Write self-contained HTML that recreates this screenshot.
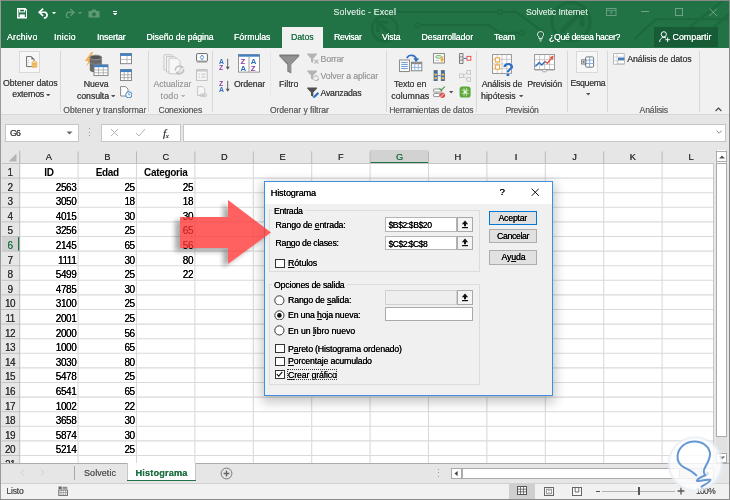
<!DOCTYPE html>
<html lang="es"><head><meta charset="utf-8"><title>Solvetic - Excel</title>
<style>
html,body{margin:0;padding:0;}
body{width:730px;height:500px;overflow:hidden;position:relative;background:#e6e6e6;font-family:"Liberation Sans",sans-serif;}
#app{position:absolute;left:0;top:0;width:730px;height:500px;overflow:hidden;}
#app div,#app span.t,#app svg{position:absolute;box-sizing:border-box;}
span.t{white-space:nowrap;will-change:opacity;text-shadow:0 0 0.45px currentColor;}
u{text-decoration:underline;text-underline-offset:1px;text-decoration-thickness:0.7px;}
</style></head><body><div id="app">
<div style="left:0px;top:0px;width:730px;height:48px;background:#217346;"></div>
<div style="left:0px;top:48px;width:730px;height:66.4px;background:#f1f1f1;"></div>
<div style="left:0px;top:114.4px;width:730px;height:1px;background:#d8d8d8;"></div>
<div style="left:0px;top:115.4px;width:730px;height:35px;background:#e6e6e6;"></div>
<svg style="left:16.5px;top:8.4px;" width="10.5" height="10.5" viewBox="0 0 10.5 10.5"><path d="M0.7 0.7 H8 L9.8 2.5 V9.8 H0.7 Z" fill="none" stroke="#fff" stroke-width="1.5"/><rect x="2.6" y="0.9" width="5" height="3" fill="none" stroke="#fff" stroke-width="1"/><rect x="2.6" y="6.4" width="5.2" height="3.2" fill="#fff"/></svg>
<svg style="left:37.8px;top:8.2px;" width="12.4" height="10.6" viewBox="0 0 11.5 10"><path d="M4.8 0.6 L1 4 L4.8 7.4" fill="none" stroke="#fff" stroke-width="1.6"/><path d="M1.2 4 H6.8 A3.4 3.1 0 0 1 6.8 9.4 H5.4" fill="none" stroke="#fff" stroke-width="1.6"/></svg>
<svg style="left:52.2px;top:12px;" width="4" height="2.4" viewBox="0 0 4 2.4"><path d="M0 0 H4 L2 2.4 Z" fill="#fff"/></svg>
<svg style="left:63px;top:8.2px;" width="12.2" height="10.2" viewBox="0 0 11.5 9.5"><path d="M6.9 0.8 L10.5 4 L6.9 7.2" fill="none" stroke="#5e9a78" stroke-width="1.3"/><path d="M10.3 4 H4.7 A3.4 3.1 0 0 0 4.7 9.2 H5.9" fill="none" stroke="#5e9a78" stroke-width="1.3"/></svg>
<svg style="left:78px;top:12px;" width="4" height="2.4" viewBox="0 0 4 2.4"><path d="M0 0 H4 L2 2.4 Z" fill="#5e9a78"/></svg>
<svg style="left:88px;top:8.6px;" width="12" height="9" viewBox="0 0 12 9"><path d="M0.5 2 H3.4 L4.4 0.5 H7.6 L8.6 2 H11.5 V8.5 H0.5 Z" fill="#5e9a78"/><circle cx="6" cy="5.2" r="2" fill="#217346" stroke="#4c8a68" stroke-width="0.6"/></svg>
<div style="left:112.7px;top:10.6px;width:4.4px;height:1.1px;background:#fff;"></div>
<svg style="left:112.7px;top:12.8px;" width="4.4" height="2.7" viewBox="0 0 4.2 2.6"><path d="M0 0 H4.2 L2.1 2.6 Z" fill="#fff"/></svg>
<svg style="left:330px;top:1px;" width="400" height="47" viewBox="0 0 400 47"><g fill="none" stroke="#1c693e" stroke-width="2.3" stroke-linecap="round" stroke-linejoin="round"><path d="M67 10.8 H167 M173 10.8 H186 L201 22 L214 32"/><path d="M90 24.2 H159 L170 31.9 H189"/><path d="M305 37.4 L326 18.2 H400"/><path d="M361 25 L392 0.4"/><path d="M372 36 L400 12"/></g><g fill="#217346" stroke="#1c693e" stroke-width="1.5"><circle cx="170" cy="10.8" r="2.3"/><circle cx="87.7" cy="24.2" r="2.3"/><circle cx="191.8" cy="31.9" r="2.3"/></g><circle cx="54.8" cy="27.8" r="12.6" fill="none" stroke="#1c693e" stroke-width="2.6"/><path d="M62 35 L49 22 M48 31 V21 H58" fill="none" stroke="#1c693e" stroke-width="3.2"/><circle cx="241" cy="20.5" r="19" fill="none" stroke="#1c693e" stroke-width="3.4"/><path d="M231 31 L251 11 M236 10 H252 V26" fill="none" stroke="#1c693e" stroke-width="4.6"/></svg>
<svg style="left:606px;top:7.6px;" width="10.5" height="8" viewBox="0 0 10.5 8"><rect x="0.5" y="0.5" width="9.5" height="7" fill="none" stroke="#6fa386" stroke-width="0.9"/><path d="M0.5 2.4 H10 M5.2 3.6 V6.4 M3.8 5 L5.2 3.6 L6.6 5" stroke="#6fa386" stroke-width="0.8" fill="none"/></svg>
<div style="left:641px;top:11.3px;width:7.5px;height:1px;background:#6fa386;"></div>
<svg style="left:674.5px;top:7.6px;" width="8" height="8" viewBox="0 0 8 8"><rect x="0.5" y="0.5" width="7" height="7" fill="none" stroke="#6fa386" stroke-width="1"/></svg>
<svg style="left:708.5px;top:7.6px;" width="8.5" height="8.5" viewBox="0 0 8.5 8.5"><path d="M0.5 0.5 L8 8 M8 0.5 L0.5 8" stroke="#6fa386" stroke-width="1"/></svg>
<svg style="left:536.9px;top:31.2px;" width="7.2" height="10.8" viewBox="0 0 8 12"><path d="M4 0.6 A3.2 3.2 0 0 1 5.8 6.6 V8.4 H2.2 V6.6 A3.2 3.2 0 0 1 4 0.6 Z" fill="none" stroke="#fff" stroke-width="0.9"/><path d="M2.6 9.8 H5.4 M3 11.2 H5" stroke="#fff" stroke-width="0.8"/></svg>
<span id="t1" class="t" style="left:333.5px;top:6.00px;font-size:8.8px;line-height:12px;color:#cfe0d5;letter-spacing:0.147px;">Solvetic - Excel</span>
<span id="t2" class="t" style="left:526px;top:6.00px;font-size:8.8px;line-height:12px;color:#cfe0d5;letter-spacing:-0.093px;">Solvetic Internet</span>
<span id="t3" class="t" style="left:7px;top:31.10px;font-size:8.8px;line-height:12px;color:#fff;letter-spacing:0.165px;">Archivo</span>
<span id="t4" class="t" style="left:54px;top:31.10px;font-size:8.8px;line-height:12px;color:#fff;letter-spacing:0.242px;">Inicio</span>
<span id="t5" class="t" style="left:97px;top:31.10px;font-size:8.8px;line-height:12px;color:#fff;letter-spacing:-0.166px;">Insertar</span>
<span id="t6" class="t" style="left:146.5px;top:31.10px;font-size:8.8px;line-height:12px;color:#fff;letter-spacing:-0.093px;">Diseño de página</span>
<span id="t7" class="t" style="left:234px;top:31.10px;font-size:8.8px;line-height:12px;color:#fff;letter-spacing:-0.021px;">Fórmulas</span>
<span id="t8" class="t" style="left:334px;top:31.10px;font-size:8.8px;line-height:12px;color:#fff;letter-spacing:-0.333px;">Revisar</span>
<span id="t9" class="t" style="left:382px;top:31.10px;font-size:8.8px;line-height:12px;color:#fff;letter-spacing:-0.181px;">Vista</span>
<span id="t10" class="t" style="left:421.5px;top:31.10px;font-size:8.8px;line-height:12px;color:#fff;letter-spacing:-0.101px;">Desarrollador</span>
<span id="t11" class="t" style="left:494px;top:31.10px;font-size:8.8px;line-height:12px;color:#fff;letter-spacing:-0.129px;">Team</span>
<span id="t12" class="t" style="left:549px;top:31.10px;font-size:8.8px;line-height:12px;color:#fff;letter-spacing:-0.398px;">¿Qué desea hacer?</span>
<div style="left:281.5px;top:26.5px;width:41.5px;height:22px;background:#f1f1f1;"></div>
<span id="t13" class="t" style="left:291px;top:31.10px;font-size:8.8px;line-height:12px;color:#217346;letter-spacing:-0.097px;">Datos</span>
<div style="left:653.5px;top:27px;width:64px;height:20px;background:#185c37;"></div>
<span id="t14" class="t" style="left:672.5px;top:31.10px;font-size:8.8px;line-height:12px;color:#fff;letter-spacing:0.042px;">Compartir</span>
<svg style="left:658.5px;top:31px;" width="12" height="11.5" viewBox="0 0 12 11.5"><circle cx="4.8" cy="3.3" r="2.6" fill="none" stroke="#fff" stroke-width="1"/><path d="M0.6 11 A4.3 4.6 0 0 1 7 7" fill="none" stroke="#fff" stroke-width="1"/><path d="M8.6 6.4 V11 M6.3 8.7 H10.9" stroke="#fff" stroke-width="1"/></svg>
<div style="left:19.2px;top:51px;width:21.3px;height:21.5px;background:#f7f7f7;border:1px solid #d9d9d9;"></div>
<svg style="left:25.8px;top:56.3px;" width="12" height="12.4" viewBox="0 0 12 12.4"><path d="M0.6 0.6 H5.4 L8.2 3.4 V10.6 H0.6 Z" fill="#fff" stroke="#6a6a6a" stroke-width="1"/><path d="M5.4 0.6 V3.4 H8.2 Z" fill="#6a6a6a"/><path d="M2.6 3.8 V8.6" stroke="#b9c6d6" stroke-width="1.2" stroke-dasharray="1.2 0.9"/><rect x="5.6" y="4.9" width="5.6" height="6.9" rx="1.6" fill="#eeb357"/><ellipse cx="8.4" cy="6" rx="2.6" ry="1" fill="#f7d498"/><path d="M5.8 8.6 A2.6 1 0 0 0 11 8.6" fill="none" stroke="#f7d498" stroke-width="0.6"/></svg>
<span id="t15" class="t" style="left:3px;top:77.00px;font-size:8.8px;line-height:12px;color:#444;letter-spacing:-0.096px;">Obtener datos</span>
<span id="t16" class="t" style="left:12.3px;top:88.10px;font-size:8.8px;line-height:12px;color:#444;letter-spacing:-0.256px;">externos</span>
<svg style="left:45.5px;top:93.49999999999999px;" width="4.4" height="2.6" viewBox="0 0 4.4 2.6"><path d="M0 0 L4.4 0 L2.2 2.6 Z" fill="#555"/></svg>
<div style="left:60px;top:51px;width:1px;height:60.8px;background:#d8d8d8;"></div>
<svg style="left:84px;top:52.2px;" width="24.5" height="24.5" viewBox="0 0 24.5 24.5"><path d="M7.4 0 L0.8 9 H4.4 L2.2 14.5 L9.4 6 H6 L9.4 0 Z" fill="#f2b050"/><path d="M5.8 5.4 V18 A6 2.3 0 0 0 17.8 18 V5.4 Z" fill="#6a6a6a"/><ellipse cx="11.8" cy="5.4" rx="6" ry="2.3" fill="#555" stroke="#9c9c9c" stroke-width="0.8"/><path d="M5.8 10 A6 2.3 0 0 0 17.8 10" fill="none" stroke="#8e8e8e" stroke-width="0.6"/><rect x="10" y="12.8" width="14" height="10.8" fill="#fff" stroke="#7b7b7b" stroke-width="0.9"/><rect x="10" y="12.8" width="14" height="2.4" fill="#3f7fc4"/><path d="M14.6 15.2 V23.6 M19.3 15.2 V23.6 M10 18 H24 M10 20.8 H24" stroke="#9b9b9b" stroke-width="0.7"/></svg>
<span id="t17" class="t" style="left:83.8px;top:77.70px;font-size:8.8px;line-height:12px;color:#444;letter-spacing:-0.147px;">Nueva</span>
<span id="t18" class="t" style="left:77px;top:89.60px;font-size:8.8px;line-height:12px;color:#444;letter-spacing:-0.096px;">consulta</span>
<svg style="left:110.8px;top:94.8px;" width="4.4" height="2.6" viewBox="0 0 4.4 2.6"><path d="M0 0 L4.4 0 L2.2 2.6 Z" fill="#555"/></svg>
<svg style="left:119.6px;top:53px;" width="12" height="11.5" viewBox="0 0 12 11.5"><rect x="0.5" y="0.5" width="11" height="10.2" fill="#fff" stroke="#7b7b7b" stroke-width="0.9"/><rect x="0.5" y="0.5" width="11" height="2.4" fill="#3f7fc4"/><path d="M0.5 6.5 H11.5 M7 3 V10.5" stroke="#a5a5a5" stroke-width="0.7"/></svg>
<svg style="left:119.6px;top:69px;" width="12" height="12" viewBox="0 0 12 12"><rect x="0.5" y="0.5" width="11" height="11" fill="#fff" stroke="#7b7b7b" stroke-width="0.9"/><rect x="0.5" y="0.5" width="11" height="2.6" fill="#3f7fc4"/><path d="M0.5 5.8 H11.5 M0.5 8.6 H11.5 M4.2 3 V11.5 M7.9 3 V11.5" stroke="#8f8f8f" stroke-width="0.7"/></svg>
<svg style="left:119.6px;top:85.7px;" width="12.5" height="12.5" viewBox="0 0 12.5 12.5"><path d="M0.6 0.6 H5.6 L8 3 V10 H0.6 Z" fill="#fff" stroke="#7b7b7b" stroke-width="0.9"/><circle cx="8.8" cy="8.8" r="3.1" fill="#fff" stroke="#3f7fc4" stroke-width="1"/><path d="M8.8 7 V8.9 H10.3" stroke="#3f7fc4" stroke-width="0.8" fill="none"/></svg>
<span id="t19" class="t" style="left:63.3px;top:103.70px;font-size:8.6px;line-height:12px;color:#666;letter-spacing:-0.051px;">Obtener y transformar</span>
<div style="left:148px;top:51px;width:1px;height:60.8px;background:#d8d8d8;"></div>
<svg style="left:162.6px;top:54px;" width="22" height="22.5" viewBox="0 0 22 22.5"><path d="M1 0.8 H9 L12 3.8 V16 H1 Z" fill="#f4f4f4" stroke="#c4c4c4" stroke-width="0.9"/><path d="M3.5 2.5 H11.5 L14.5 5.5 V18 H3.5 Z" fill="#f4f4f4" stroke="#c4c4c4" stroke-width="0.9"/><path d="M6 4.2 H14 L17 7.2 V19.8 H6 Z" fill="#f7f7f7" stroke="#c4c4c4" stroke-width="0.9"/><path d="M12.3 16.5 A4.3 4.3 0 0 1 19.6 13.2 M20.6 15 A4.3 4.3 0 0 1 13.3 18.6" fill="none" stroke="#c0c0c0" stroke-width="1.5"/><path d="M18.3 11.3 L21 13.6 L17.8 14.8 Z M15.6 20.4 L12.6 18.3 L15.9 17.1 Z" fill="#c0c0c0"/></svg>
<span id="t20" class="t" style="left:153.4px;top:77.70px;font-size:8.8px;line-height:12px;color:#a0a0a0;letter-spacing:-0.062px;">Actualizar</span>
<span id="t21" class="t" style="left:160.5px;top:89.60px;font-size:8.8px;line-height:12px;color:#a0a0a0;letter-spacing:0.244px;">todo</span>
<svg style="left:180.5px;top:94.8px;" width="4.4" height="2.6" viewBox="0 0 4.4 2.6"><path d="M0 0 L4.4 0 L2.2 2.6 Z" fill="#b5b5b5"/></svg>
<svg style="left:195.5px;top:53px;" width="12" height="10" viewBox="0 0 12 10"><rect x="0.6" y="0.6" width="10.8" height="7.6" rx="0.8" fill="#fff" stroke="#666" stroke-width="1"/><path d="M6 2 L7.8 4.4 L6 6.8 L4.2 4.4 Z" fill="none" stroke="#3f7fc4" stroke-width="0.9"/><path d="M0.6 9.2 H11.4" stroke="#999" stroke-width="0.8"/></svg>
<svg style="left:195.5px;top:69px;" width="12" height="12" viewBox="0 0 12 12"><rect x="0.6" y="0.6" width="10.6" height="10.8" fill="#f6f6f6" stroke="#bcbcbc" stroke-width="0.9"/><rect x="0.6" y="0.6" width="10.6" height="2" fill="#c9c9c9"/><path d="M2.5 5.2 H4 M5.2 5.2 H9.5 M2.5 8 H4 M5.2 8 H9.5" stroke="#bdbdbd" stroke-width="0.9"/></svg>
<svg style="left:196.5px;top:86px;" width="11" height="12" viewBox="0 0 11 12"><path d="M0.6 0.6 H5.4 L7.8 3 V9.5 H0.6 Z" fill="#f6f6f6" stroke="#c2c2c2" stroke-width="0.9"/><rect x="3" y="7.8" width="3.8" height="2.8" rx="1.3" fill="none" stroke="#c2c2c2" stroke-width="0.9"/><rect x="5.8" y="7.8" width="3.8" height="2.8" rx="1.3" fill="none" stroke="#c2c2c2" stroke-width="0.9"/></svg>
<span id="t22" class="t" style="left:158.5px;top:103.70px;font-size:8.6px;line-height:12px;color:#666;letter-spacing:-0.189px;">Conexiones</span>
<div style="left:212px;top:51px;width:1px;height:60.8px;background:#d8d8d8;"></div>
<svg style="left:219px;top:57.5px;" width="12" height="13" viewBox="0 0 12 13"><text x="0" y="5.6" font-size="6.8" font-weight="bold" fill="#2f6fc0" font-family="Liberation Sans,sans-serif">A</text><text x="0" y="12" font-size="6.8" font-weight="bold" fill="#8a3ea8" font-family="Liberation Sans,sans-serif">Z</text><path d="M8.7 0.8 V10" stroke="#555" stroke-width="0.9" fill="none"/><path d="M6.7 8.8 L8.7 11.8 L10.7 8.8 Z" fill="#555"/></svg>
<svg style="left:219px;top:80.2px;" width="12" height="13" viewBox="0 0 12 13"><text x="0" y="5.6" font-size="6.8" font-weight="bold" fill="#8a3ea8" font-family="Liberation Sans,sans-serif">Z</text><text x="0" y="12" font-size="6.8" font-weight="bold" fill="#2f6fc0" font-family="Liberation Sans,sans-serif">A</text><path d="M8.7 0.8 V10" stroke="#555" stroke-width="0.9" fill="none"/><path d="M6.7 8.8 L8.7 11.8 L10.7 8.8 Z" fill="#555"/></svg>
<svg style="left:238px;top:54.3px;" width="22" height="19" viewBox="0 0 22 19"><rect x="0.5" y="0.5" width="21" height="17.6" fill="#fff" stroke="#8a8a8a" stroke-width="0.9"/><rect x="0.5" y="0.5" width="21" height="2.2" fill="#3f7fc4"/><path d="M11 2.7 V18" stroke="#8a8a8a" stroke-width="0.8"/><text x="2.6" y="9.8" font-size="7.8" font-weight="bold" fill="#8a3ea8" font-family="Liberation Sans,sans-serif">Z</text><text x="2.6" y="17" font-size="7.8" font-weight="bold" fill="#2f6fc0" font-family="Liberation Sans,sans-serif">A</text><text x="12.8" y="9.8" font-size="7.8" font-weight="bold" fill="#2f6fc0" font-family="Liberation Sans,sans-serif">A</text><text x="12.8" y="17" font-size="7.8" font-weight="bold" fill="#8a3ea8" font-family="Liberation Sans,sans-serif">Z</text></svg>
<span id="t23" class="t" style="left:233.9px;top:77.70px;font-size:8.8px;line-height:12px;color:#444;letter-spacing:-0.169px;">Ordenar</span>
<div style="left:270px;top:51px;width:1px;height:44px;background:#e6e6e6;"></div>
<svg style="left:279px;top:53.6px;" width="20.5" height="20.5" viewBox="0 0 20.5 20.5"><path d="M0.3 0.6 H20.2 V2.2 L12.2 10.4 V19.6 L8.3 17.4 V10.4 L0.3 2.2 Z" fill="#7a7a7a"/><path d="M1.2 2.2 H19.3 L12.2 9.6 V18.4 L9.2 16.8 V9.6 Z" fill="#929292"/></svg>
<span id="t24" class="t" style="left:279px;top:77.70px;font-size:8.8px;line-height:12px;color:#444;letter-spacing:-0.027px;">Filtro</span>
<svg style="left:306.6px;top:53.4px;" width="12.5" height="11.5" viewBox="0 0 12.5 11.5"><path d="M0.2 0.4 H10 V1.5 L6.3 5.4 V10 L4 8.7 V5.4 L0.2 1.5 Z" fill="#b4b4b4"/><path d="M7.4 6.6 L11.4 10.6 M11.4 6.6 L7.4 10.6" stroke="#b0b0b0" stroke-width="1.1"/></svg>
<svg style="left:306.6px;top:70px;" width="12.5" height="11.5" viewBox="0 0 12.5 11.5"><path d="M0.2 0.4 H10 V1.5 L6.3 5.4 V10 L4 8.7 V5.4 L0.2 1.5 Z" fill="#b4b4b4"/><circle cx="9" cy="8.2" r="2.4" fill="none" stroke="#b4b4b4" stroke-width="1" stroke-dasharray="5.5 2"/><path d="M10.4 10.9 L12.2 9.6 L10.2 8.6 Z" fill="#b4b4b4"/></svg>
<svg style="left:306.6px;top:86.8px;" width="12.5" height="11.5" viewBox="0 0 12.5 11.5"><path d="M0.2 0.4 H10 V1.5 L6.3 5.4 V10 L4 8.7 V5.4 L0.2 1.5 Z" fill="#505050"/><path d="M6 11.2 L6.6 9 L10.6 5 L12.2 6.6 L8.2 10.6 Z" fill="#2f6fc0"/></svg>
<span id="t25" class="t" style="left:320.6px;top:53.20px;font-size:8.8px;line-height:12px;color:#a0a0a0;letter-spacing:-0.209px;">Borrar</span>
<span id="t26" class="t" style="left:320.6px;top:70.00px;font-size:8.8px;line-height:12px;color:#a0a0a0;letter-spacing:-0.166px;">Volver a aplicar</span>
<span id="t27" class="t" style="left:320.6px;top:86.90px;font-size:8.8px;line-height:12px;color:#444;letter-spacing:-0.297px;">Avanzadas</span>
<span id="t28" class="t" style="left:269.9px;top:103.70px;font-size:8.6px;line-height:12px;color:#666;letter-spacing:-0.047px;">Ordenar y filtrar</span>
<div style="left:386px;top:51px;width:1px;height:60.8px;background:#d8d8d8;"></div>
<svg style="left:399px;top:52.5px;" width="23.5" height="20.5" viewBox="0 0 23.5 20.5"><path d="M7.8 5.2 A5.2 5.2 0 0 1 17.4 5.8" fill="none" stroke="#2f6fc0" stroke-width="1.7"/><path d="M14.4 5 L20.2 5.6 L16.9 9.2 Z" fill="#2f6fc0"/><rect x="0.6" y="7" width="9.8" height="11.6" fill="#fff" stroke="#7b7b7b" stroke-width="0.9"/><path d="M2.2 9.6 H8.8 M2.2 11.6 H8.8 M2.2 13.6 H8.8 M2.2 15.6 H8.8" stroke="#3f7fc4" stroke-width="0.8"/><rect x="12.4" y="9.2" width="10.4" height="8.6" fill="#fff" stroke="#7b7b7b" stroke-width="0.9"/><rect x="12.4" y="9.2" width="10.4" height="2" fill="#8a8a8a"/><path d="M15.8 11 V17.8 M19.3 11 V17.8 M12.4 14.4 H22.8" stroke="#7aa7db" stroke-width="0.8"/></svg>
<span id="t29" class="t" style="left:394px;top:77.70px;font-size:8.8px;line-height:12px;color:#444;letter-spacing:-0.133px;">Texto en</span>
<span id="t30" class="t" style="left:391.3px;top:89.60px;font-size:8.8px;line-height:12px;color:#444;letter-spacing:0.043px;">columnas</span>
<svg style="left:433px;top:52.8px;" width="12.5" height="11.5" viewBox="0 0 12.5 11.5"><rect x="0.6" y="0.6" width="10.8" height="9.4" fill="#fff" stroke="#7b7b7b" stroke-width="0.9"/><rect x="2.8" y="2.6" width="5.6" height="2.6" rx="1.2" fill="#dff0d8" stroke="#5b9b4d" stroke-width="0.7"/><path d="M2.4 7.4 H6" stroke="#aaa" stroke-width="0.7"/><path d="M9.6 3.2 L7 7.4 H8.8 L7.6 10.8 L11.6 6 H9.6 L10.8 3.2 Z" fill="#f0a63a"/></svg>
<svg style="left:433px;top:69.7px;" width="12.5" height="11.5" viewBox="0 0 12.5 11.5"><rect x="1" y="0.6" width="3.2" height="10.2" fill="#2f6fc0" stroke="#555" stroke-width="0.6"/><rect x="8.2" y="0.6" width="3.2" height="10.2" fill="#2f6fc0" stroke="#555" stroke-width="0.6"/><rect x="1.4" y="3.6" width="2.4" height="2" fill="#f2c14e"/><rect x="8.6" y="3.6" width="2.4" height="2" fill="#f2c14e"/><rect x="1.4" y="7.2" width="2.4" height="2" fill="#f2c14e"/><rect x="8.6" y="7.2" width="2.4" height="2" fill="#f2c14e"/><path d="M4.8 5.7 H7.6" stroke="#2f6fc0" stroke-width="0.9"/></svg>
<svg style="left:433px;top:86px;" width="13" height="12.5" viewBox="0 0 13 12.5"><rect x="0.6" y="3" width="8" height="3" rx="0.6" fill="#fff" stroke="#777" stroke-width="0.8"/><rect x="0.6" y="7.6" width="6" height="3" rx="0.6" fill="#fff" stroke="#777" stroke-width="0.8"/><path d="M6.4 2.6 L8.2 4.4 L11.8 0.6" fill="none" stroke="#4c9b4c" stroke-width="1.2"/><circle cx="9.4" cy="9.2" r="2.7" fill="#e0524c"/><path d="M7.6 11 L11.2 7.4" stroke="#fff" stroke-width="0.8"/></svg>
<svg style="left:449.3px;top:91.2px;" width="4.4" height="2.6" viewBox="0 0 4.4 2.6"><path d="M0 0 L4.4 0 L2.2 2.6 Z" fill="#555"/></svg>
<svg style="left:459px;top:52.8px;" width="12.5" height="11.5" viewBox="0 0 12.5 11.5"><rect x="0.6" y="0.6" width="3.4" height="9.8" fill="#e8e8e8" stroke="#666" stroke-width="0.8"/><path d="M0.6 3.9 H4 M0.6 7.1 H4" stroke="#666" stroke-width="0.7"/><path d="M4.6 5.4 H7.6" stroke="#2f6fc0" stroke-width="1"/><rect x="8" y="3.4" width="3.8" height="3.8" fill="#fff" stroke="#e0524c" stroke-width="1"/></svg>
<svg style="left:459px;top:69.7px;" width="12.5" height="12" viewBox="0 0 12.5 12"><rect x="0.6" y="4" width="3.6" height="3.6" fill="#f4f4f4" stroke="#bcbcbc" stroke-width="0.8"/><rect x="8" y="0.6" width="3.6" height="3.6" fill="#f4f4f4" stroke="#bcbcbc" stroke-width="0.8"/><rect x="8" y="7.6" width="3.6" height="3.6" fill="#f4f4f4" stroke="#bcbcbc" stroke-width="0.8"/><path d="M4.2 5.8 L8 2.4 M4.2 5.8 L8 9.4" stroke="#bcbcbc" stroke-width="0.8" fill="none"/></svg>
<svg style="left:459px;top:86px;" width="12.5" height="12.5" viewBox="0 0 12.5 12.5"><rect x="0.6" y="0.6" width="11" height="11" rx="2.6" fill="#5aa83a"/><path d="M2.4 4.2 H9.8 M2.4 7.4 H9.8 M5 2 V10.2 M7.6 2 V10.2" stroke="#cfe8bf" stroke-width="0.8"/><circle cx="6.2" cy="6" r="1.4" fill="#e9f5df"/></svg>
<span id="t31" class="t" style="left:389.2px;top:103.70px;font-size:8.6px;line-height:12px;color:#666;letter-spacing:-0.126px;">Herramientas de datos</span>
<div style="left:476px;top:51px;width:1px;height:60.8px;background:#d8d8d8;"></div>
<svg style="left:492.4px;top:54px;" width="22.5" height="22.5" viewBox="0 0 22.5 22.5"><rect x="0.6" y="0.6" width="18.8" height="18.8" fill="#fff" stroke="#8a8a8a" stroke-width="0.9"/><path d="M0.6 5.3 H19.4 M0.6 10 H19.4 M0.6 14.7 H19.4 M5.3 0.6 V19.4 M10 0.6 V19.4 M14.7 0.6 V19.4" stroke="#b5b5b5" stroke-width="0.7"/><rect x="3.4" y="3.8" width="4.2" height="4.2" fill="#fff" stroke="#f0a63a" stroke-width="1.1"/><rect x="3.4" y="11" width="4.2" height="4.2" fill="#fff" stroke="#f0a63a" stroke-width="1.1"/><text x="10.4" y="22" font-size="19" font-weight="bold" fill="#2f6fc0" stroke="#f1f1f1" stroke-width="0.5" paint-order="stroke" font-family="Liberation Sans,sans-serif">?</text></svg>
<span id="t32" class="t" style="left:481.7px;top:77.70px;font-size:8.8px;line-height:12px;color:#444;letter-spacing:-0.186px;">Análisis de</span>
<span id="t33" class="t" style="left:481px;top:89.60px;font-size:8.8px;line-height:12px;color:#444;letter-spacing:-0.015px;">hipótesis</span>
<svg style="left:519.1999999999999px;top:94.8px;" width="4.4" height="2.6" viewBox="0 0 4.4 2.6"><path d="M0 0 L4.4 0 L2.2 2.6 Z" fill="#555"/></svg>
<svg style="left:533.9px;top:54px;" width="21.5" height="19" viewBox="0 0 21.5 19"><rect x="0.6" y="0.6" width="20" height="15" fill="#fff" stroke="#8a8a8a" stroke-width="0.9"/><path d="M0.6 5.6 H20.6 M0.6 10.6 H20.6 M5.6 0.6 V15.6 M10.6 0.6 V15.6 M15.6 0.6 V15.6" stroke="#b5b5b5" stroke-width="0.7"/><path d="M1.4 12.6 L5.2 8.6 L7.8 11 L11 7.6" fill="none" stroke="#2f6fc0" stroke-width="1.4"/><path d="M11 7.6 L13.6 9 L18 3.6" fill="none" stroke="#e0523a" stroke-width="1.4"/><path d="M19.6 1.6 L19 5.8 L15.6 3.2 Z" fill="#e0523a"/><path d="M1 16 H8 L9 17.8 H12 L13 16 H20" stroke="#9a9a9a" stroke-width="0.8" fill="none"/></svg>
<span id="t34" class="t" style="left:527.3px;top:77.70px;font-size:8.8px;line-height:12px;color:#444;letter-spacing:-0.165px;">Previsión</span>
<span id="t35" class="t" style="left:505.5px;top:103.70px;font-size:8.6px;line-height:12px;color:#666;letter-spacing:-0.251px;">Previsión</span>
<div style="left:567px;top:51px;width:1px;height:60.8px;background:#d8d8d8;"></div>
<div style="left:576.4px;top:51.2px;width:21.2px;height:21.5px;background:#f7f7f7;border:1px solid #d9d9d9;"></div>
<svg style="left:581.4px;top:55.8px;" width="13.2" height="12" viewBox="0 0 11.5 10.5"><rect x="4" y="0.8" width="7" height="9" rx="1" fill="#fff" stroke="#6a6a6a" stroke-width="0.8"/><path d="M4 3.6 H11 M4 6.6 H11 M7.5 0.8 V9.8" stroke="#7aa7db" stroke-width="0.8"/><rect x="0.6" y="3.4" width="3.6" height="3.6" fill="#fff" stroke="#666" stroke-width="0.8"/><path d="M1.4 5.2 H3.4 M2.4 4.2 V6.2" stroke="#555" stroke-width="0.7"/></svg>
<span id="t36" class="t" style="left:570.5px;top:76.60px;font-size:8.8px;line-height:12px;color:#444;letter-spacing:-0.353px;">Esquema</span>
<svg style="left:585.8px;top:93.0px;" width="4.4" height="2.6" viewBox="0 0 4.4 2.6"><path d="M0 0 L4.4 0 L2.2 2.6 Z" fill="#555"/></svg>
<div style="left:607px;top:51px;width:1px;height:60.8px;background:#d8d8d8;"></div>
<svg style="left:612.8px;top:53px;" width="12" height="12" viewBox="0 0 12 12"><rect x="0.6" y="0.6" width="10.6" height="10.6" fill="#fff" stroke="#a9a9a9" stroke-width="0.8"/><path d="M0.6 4 H11.2 M0.6 7.6 H11.2 M4 0.6 V11.2" stroke="#c6c6c6" stroke-width="0.7"/><rect x="5" y="4.6" width="6.4" height="2.4" fill="#3f7fc4"/><rect x="5" y="7.4" width="6.4" height="3.4" fill="#fff" stroke="#a9a9a9" stroke-width="0.6"/></svg>
<span id="t37" class="t" style="left:627.3px;top:53.20px;font-size:8.8px;line-height:12px;color:#444;letter-spacing:-0.142px;">Análisis de datos</span>
<span id="t38" class="t" style="left:639.6px;top:103.70px;font-size:8.6px;line-height:12px;color:#666;letter-spacing:-0.153px;">Análisis</span>
<div style="left:699px;top:51px;width:1px;height:60.8px;background:#d8d8d8;"></div>
<svg style="left:715.3px;top:107.3px;" width="7" height="4.5" viewBox="0 0 7 4.5"><path d="M0.6 4 L3.5 1 L6.4 4" fill="none" stroke="#444" stroke-width="1.1"/></svg>
<div style="left:5px;top:123.5px;width:74px;height:18.5px;background:#fff;border:1px solid #c6c6c6;"></div>
<span id="t39" class="t" style="left:10px;top:127.00px;font-size:8.8px;line-height:12px;color:#444;letter-spacing:-0.800px;">G6</span>
<svg style="left:66px;top:131px;" width="7" height="4" viewBox="0 0 7 4"><path d="M0.5 0.5 L3.5 3.5 L6.5 0.5 Z" fill="#666"/></svg>
<div style="left:88.5px;top:128px;width:1px;height:1px;background:#999;"></div>
<div style="left:88.5px;top:131.5px;width:1px;height:1px;background:#999;"></div>
<div style="left:88.5px;top:135px;width:1px;height:1px;background:#999;"></div>
<div style="left:100.5px;top:123.5px;width:80.5px;height:18.5px;background:#fff;border:1px solid #c6c6c6;"></div>
<svg style="left:110px;top:128px;" width="9" height="9" viewBox="0 0 9 9"><path d="M1 1 L8 8 M8 1 L1 8" stroke="#b4b4b4" stroke-width="1" fill="none"/></svg>
<svg style="left:135px;top:128px;" width="11" height="9" viewBox="0 0 11 9"><path d="M1 5 L4 8 L10 1" stroke="#b4b4b4" stroke-width="1" fill="none"/></svg>
<span id="t40" class="t" style="left:163px;top:126.60px;font-size:11px;line-height:12px;color:#444;font-family:'Liberation Serif',serif;"><i>f</i><i style="font-size:7px;position:relative;top:1.2px;left:-0.3px;">x</i></span>
<div style="left:183px;top:123.5px;width:542.5px;height:18.5px;background:#fff;border:1px solid #c6c6c6;"></div>
<svg style="left:716.3px;top:130px;" width="6.4" height="4" viewBox="0 0 6.4 4"><path d="M0.6 0.6 L3.2 3.2 L5.8 0.6" stroke="#8a8a8a" stroke-width="1" fill="none"/></svg>
<div style="left:0px;top:150px;width:730px;height:313px;background:#e6e6e6;"></div>
<div style="left:1.5px;top:150.4px;width:18.2px;height:312.6px;background:#e6e6e6;"></div>
<div style="left:19.7px;top:163.5px;width:693.9px;height:299.5px;background:#fff;"></div>
<div style="left:370.09999999999997px;top:150.4px;width:58.4px;height:13.099999999999994px;background:#d2d2d2;"></div>
<div style="left:370.09999999999997px;top:161.9px;width:58.4px;height:1.6px;background:#217346;"></div>
<div style="left:1.5px;top:236.5px;width:18.2px;height:14.6px;background:#d2d2d2;"></div>
<div style="left:18.099999999999998px;top:236.5px;width:1.6px;height:14.6px;background:#217346;"></div>
<svg style="left:0px;top:150px;" width="714" height="313" viewBox="0 0 714 313"><line x1="19.70" y1="1.40" x2="19.70" y2="13.50" stroke="#b9b9b9" stroke-width="1"/><line x1="78.10" y1="1.40" x2="78.10" y2="13.50" stroke="#b9b9b9" stroke-width="1"/><line x1="78.10" y1="13.50" x2="78.10" y2="313" stroke="#dadada" stroke-width="1.1"/><line x1="136.50" y1="1.40" x2="136.50" y2="13.50" stroke="#b9b9b9" stroke-width="1"/><line x1="136.50" y1="13.50" x2="136.50" y2="313" stroke="#dadada" stroke-width="1.1"/><line x1="194.90" y1="1.40" x2="194.90" y2="13.50" stroke="#b9b9b9" stroke-width="1"/><line x1="194.90" y1="13.50" x2="194.90" y2="313" stroke="#dadada" stroke-width="1.1"/><line x1="253.30" y1="1.40" x2="253.30" y2="13.50" stroke="#b9b9b9" stroke-width="1"/><line x1="253.30" y1="13.50" x2="253.30" y2="313" stroke="#dadada" stroke-width="1.1"/><line x1="311.70" y1="1.40" x2="311.70" y2="13.50" stroke="#b9b9b9" stroke-width="1"/><line x1="311.70" y1="13.50" x2="311.70" y2="313" stroke="#dadada" stroke-width="1.1"/><line x1="370.10" y1="1.40" x2="370.10" y2="13.50" stroke="#b9b9b9" stroke-width="1"/><line x1="370.10" y1="13.50" x2="370.10" y2="313" stroke="#dadada" stroke-width="1.1"/><line x1="428.50" y1="1.40" x2="428.50" y2="13.50" stroke="#b9b9b9" stroke-width="1"/><line x1="428.50" y1="13.50" x2="428.50" y2="313" stroke="#dadada" stroke-width="1.1"/><line x1="486.90" y1="1.40" x2="486.90" y2="13.50" stroke="#b9b9b9" stroke-width="1"/><line x1="486.90" y1="13.50" x2="486.90" y2="313" stroke="#dadada" stroke-width="1.1"/><line x1="545.30" y1="1.40" x2="545.30" y2="13.50" stroke="#b9b9b9" stroke-width="1"/><line x1="545.30" y1="13.50" x2="545.30" y2="313" stroke="#dadada" stroke-width="1.1"/><line x1="603.70" y1="1.40" x2="603.70" y2="13.50" stroke="#b9b9b9" stroke-width="1"/><line x1="603.70" y1="13.50" x2="603.70" y2="313" stroke="#dadada" stroke-width="1.1"/><line x1="662.10" y1="1.40" x2="662.10" y2="13.50" stroke="#b9b9b9" stroke-width="1"/><line x1="662.10" y1="13.50" x2="662.10" y2="313" stroke="#dadada" stroke-width="1.1"/><line x1="19.70" y1="13.50" x2="713.60" y2="13.50" stroke="#c4c4c4" stroke-width="1.1"/><line x1="1.5" y1="13.50" x2="19.70" y2="13.50" stroke="#c2c2c2" stroke-width="1"/><line x1="19.70" y1="28.10" x2="713.60" y2="28.10" stroke="#dadada" stroke-width="1.1"/><line x1="1.5" y1="28.10" x2="19.70" y2="28.10" stroke="#c2c2c2" stroke-width="1"/><line x1="19.70" y1="42.70" x2="713.60" y2="42.70" stroke="#dadada" stroke-width="1.1"/><line x1="1.5" y1="42.70" x2="19.70" y2="42.70" stroke="#c2c2c2" stroke-width="1"/><line x1="19.70" y1="57.30" x2="713.60" y2="57.30" stroke="#dadada" stroke-width="1.1"/><line x1="1.5" y1="57.30" x2="19.70" y2="57.30" stroke="#c2c2c2" stroke-width="1"/><line x1="19.70" y1="71.90" x2="713.60" y2="71.90" stroke="#dadada" stroke-width="1.1"/><line x1="1.5" y1="71.90" x2="19.70" y2="71.90" stroke="#c2c2c2" stroke-width="1"/><line x1="19.70" y1="86.50" x2="713.60" y2="86.50" stroke="#dadada" stroke-width="1.1"/><line x1="1.5" y1="86.50" x2="19.70" y2="86.50" stroke="#c2c2c2" stroke-width="1"/><line x1="19.70" y1="101.10" x2="713.60" y2="101.10" stroke="#dadada" stroke-width="1.1"/><line x1="1.5" y1="101.10" x2="19.70" y2="101.10" stroke="#c2c2c2" stroke-width="1"/><line x1="19.70" y1="115.70" x2="713.60" y2="115.70" stroke="#dadada" stroke-width="1.1"/><line x1="1.5" y1="115.70" x2="19.70" y2="115.70" stroke="#c2c2c2" stroke-width="1"/><line x1="19.70" y1="130.30" x2="713.60" y2="130.30" stroke="#dadada" stroke-width="1.1"/><line x1="1.5" y1="130.30" x2="19.70" y2="130.30" stroke="#c2c2c2" stroke-width="1"/><line x1="19.70" y1="144.90" x2="713.60" y2="144.90" stroke="#dadada" stroke-width="1.1"/><line x1="1.5" y1="144.90" x2="19.70" y2="144.90" stroke="#c2c2c2" stroke-width="1"/><line x1="19.70" y1="159.50" x2="713.60" y2="159.50" stroke="#dadada" stroke-width="1.1"/><line x1="1.5" y1="159.50" x2="19.70" y2="159.50" stroke="#c2c2c2" stroke-width="1"/><line x1="19.70" y1="174.10" x2="713.60" y2="174.10" stroke="#dadada" stroke-width="1.1"/><line x1="1.5" y1="174.10" x2="19.70" y2="174.10" stroke="#c2c2c2" stroke-width="1"/><line x1="19.70" y1="188.70" x2="713.60" y2="188.70" stroke="#dadada" stroke-width="1.1"/><line x1="1.5" y1="188.70" x2="19.70" y2="188.70" stroke="#c2c2c2" stroke-width="1"/><line x1="19.70" y1="203.30" x2="713.60" y2="203.30" stroke="#dadada" stroke-width="1.1"/><line x1="1.5" y1="203.30" x2="19.70" y2="203.30" stroke="#c2c2c2" stroke-width="1"/><line x1="19.70" y1="217.90" x2="713.60" y2="217.90" stroke="#dadada" stroke-width="1.1"/><line x1="1.5" y1="217.90" x2="19.70" y2="217.90" stroke="#c2c2c2" stroke-width="1"/><line x1="19.70" y1="232.50" x2="713.60" y2="232.50" stroke="#dadada" stroke-width="1.1"/><line x1="1.5" y1="232.50" x2="19.70" y2="232.50" stroke="#c2c2c2" stroke-width="1"/><line x1="19.70" y1="247.10" x2="713.60" y2="247.10" stroke="#dadada" stroke-width="1.1"/><line x1="1.5" y1="247.10" x2="19.70" y2="247.10" stroke="#c2c2c2" stroke-width="1"/><line x1="19.70" y1="261.70" x2="713.60" y2="261.70" stroke="#dadada" stroke-width="1.1"/><line x1="1.5" y1="261.70" x2="19.70" y2="261.70" stroke="#c2c2c2" stroke-width="1"/><line x1="19.70" y1="276.30" x2="713.60" y2="276.30" stroke="#dadada" stroke-width="1.1"/><line x1="1.5" y1="276.30" x2="19.70" y2="276.30" stroke="#c2c2c2" stroke-width="1"/><line x1="19.70" y1="290.90" x2="713.60" y2="290.90" stroke="#dadada" stroke-width="1.1"/><line x1="1.5" y1="290.90" x2="19.70" y2="290.90" stroke="#c2c2c2" stroke-width="1"/><line x1="19.70" y1="305.50" x2="713.60" y2="305.50" stroke="#dadada" stroke-width="1.1"/><line x1="1.5" y1="305.50" x2="19.70" y2="305.50" stroke="#c2c2c2" stroke-width="1"/><line x1="19.70" y1="0.40" x2="19.70" y2="313" stroke="#bdbdbd" stroke-width="1"/><line x1="713.60" y1="13.50" x2="713.60" y2="313" stroke="#c4c4c4" stroke-width="1"/><path d="M16.5 3.5 L16.5 11.5 L8.5 11.5 Z" fill="#b4b4b4"/></svg>
<span id="t41" class="t" style="left:45.699999999999996px;top:150.60px;font-size:9.3px;line-height:12px;color:#333;width:6.4px;text-align:center;">A</span>
<span id="t42" class="t" style="left:104.1px;top:150.60px;font-size:9.3px;line-height:12px;color:#333;width:6.4px;text-align:center;">B</span>
<span id="t43" class="t" style="left:162.5px;top:150.60px;font-size:9.3px;line-height:12px;color:#333;width:6.4px;text-align:center;">C</span>
<span id="t44" class="t" style="left:220.89999999999998px;top:150.60px;font-size:9.3px;line-height:12px;color:#333;width:6.4px;text-align:center;">D</span>
<span id="t45" class="t" style="left:279.3px;top:150.60px;font-size:9.3px;line-height:12px;color:#333;width:6.4px;text-align:center;">E</span>
<span id="t46" class="t" style="left:337.7px;top:150.60px;font-size:9.3px;line-height:12px;color:#333;width:6.4px;text-align:center;">F</span>
<span id="t47" class="t" style="left:396.09999999999997px;top:150.60px;font-size:9.3px;line-height:12px;color:#217346;width:6.4px;text-align:center;">G</span>
<span id="t48" class="t" style="left:454.5px;top:150.60px;font-size:9.3px;line-height:12px;color:#333;width:6.4px;text-align:center;">H</span>
<span id="t49" class="t" style="left:512.9px;top:150.60px;font-size:9.3px;line-height:12px;color:#333;width:6.4px;text-align:center;">I</span>
<span id="t50" class="t" style="left:571.3000000000001px;top:150.60px;font-size:9.3px;line-height:12px;color:#333;width:6.4px;text-align:center;">J</span>
<span id="t51" class="t" style="left:629.7px;top:150.60px;font-size:9.3px;line-height:12px;color:#333;width:6.4px;text-align:center;">K</span>
<span id="t52" class="t" style="left:687.8px;top:150.60px;font-size:9.3px;line-height:12px;color:#333;width:6.4px;text-align:center;">L</span>
<span id="t53" class="t" style="left:2px;top:167.00px;font-size:10px;line-height:12px;color:#333;width:16.2px;text-align:center;letter-spacing:-0.55px;">1</span>
<span id="t54" class="t" style="left:2px;top:181.60px;font-size:10px;line-height:12px;color:#333;width:16.2px;text-align:center;letter-spacing:-0.55px;">2</span>
<span id="t55" class="t" style="left:2px;top:196.20px;font-size:10px;line-height:12px;color:#333;width:16.2px;text-align:center;letter-spacing:-0.55px;">3</span>
<span id="t56" class="t" style="left:2px;top:210.80px;font-size:10px;line-height:12px;color:#333;width:16.2px;text-align:center;letter-spacing:-0.55px;">4</span>
<span id="t57" class="t" style="left:2px;top:225.40px;font-size:10px;line-height:12px;color:#333;width:16.2px;text-align:center;letter-spacing:-0.55px;">5</span>
<span id="t58" class="t" style="left:2px;top:240.00px;font-size:10px;line-height:12px;color:#217346;width:16.2px;text-align:center;letter-spacing:-0.55px;">6</span>
<span id="t59" class="t" style="left:2px;top:254.60px;font-size:10px;line-height:12px;color:#333;width:16.2px;text-align:center;letter-spacing:-0.55px;">7</span>
<span id="t60" class="t" style="left:2px;top:269.20px;font-size:10px;line-height:12px;color:#333;width:16.2px;text-align:center;letter-spacing:-0.55px;">8</span>
<span id="t61" class="t" style="left:2px;top:283.80px;font-size:10px;line-height:12px;color:#333;width:16.2px;text-align:center;letter-spacing:-0.55px;">9</span>
<span id="t62" class="t" style="left:2px;top:298.40px;font-size:10px;line-height:12px;color:#333;width:16.2px;text-align:center;letter-spacing:-0.55px;">10</span>
<span id="t63" class="t" style="left:2px;top:313.00px;font-size:10px;line-height:12px;color:#333;width:16.2px;text-align:center;letter-spacing:-0.55px;">11</span>
<span id="t64" class="t" style="left:2px;top:327.60px;font-size:10px;line-height:12px;color:#333;width:16.2px;text-align:center;letter-spacing:-0.55px;">12</span>
<span id="t65" class="t" style="left:2px;top:342.20px;font-size:10px;line-height:12px;color:#333;width:16.2px;text-align:center;letter-spacing:-0.55px;">13</span>
<span id="t66" class="t" style="left:2px;top:356.80px;font-size:10px;line-height:12px;color:#333;width:16.2px;text-align:center;letter-spacing:-0.55px;">14</span>
<span id="t67" class="t" style="left:2px;top:371.40px;font-size:10px;line-height:12px;color:#333;width:16.2px;text-align:center;letter-spacing:-0.55px;">15</span>
<span id="t68" class="t" style="left:2px;top:386.00px;font-size:10px;line-height:12px;color:#333;width:16.2px;text-align:center;letter-spacing:-0.55px;">16</span>
<span id="t69" class="t" style="left:2px;top:400.60px;font-size:10px;line-height:12px;color:#333;width:16.2px;text-align:center;letter-spacing:-0.55px;">17</span>
<span id="t70" class="t" style="left:2px;top:415.20px;font-size:10px;line-height:12px;color:#333;width:16.2px;text-align:center;letter-spacing:-0.55px;">18</span>
<span id="t71" class="t" style="left:2px;top:429.80px;font-size:10px;line-height:12px;color:#333;width:16.2px;text-align:center;letter-spacing:-0.55px;">19</span>
<span id="t72" class="t" style="left:2px;top:444.40px;font-size:10px;line-height:12px;color:#333;width:16.2px;text-align:center;letter-spacing:-0.55px;">20</span>
<span id="t73" class="t" style="left:2px;top:459.00px;font-size:10px;line-height:12px;color:#333;width:16.2px;text-align:center;letter-spacing:-0.55px;">21</span>
<span id="t74" class="t" style="left:19.7px;top:166.90px;font-size:10px;line-height:12px;color:#000;font-weight:bold;width:58.4px;text-align:center;letter-spacing:-0.3px;text-shadow:none;">ID</span>
<span id="t75" class="t" style="left:78.1px;top:166.90px;font-size:10px;line-height:12px;color:#000;font-weight:bold;width:58.4px;text-align:center;letter-spacing:-0.3px;text-shadow:none;">Edad</span>
<span id="t76" class="t" style="left:136.5px;top:166.90px;font-size:10px;line-height:12px;color:#000;font-weight:bold;width:58.4px;text-align:center;letter-spacing:-0.3px;text-shadow:none;">Categoria</span>
<span id="t77" class="t" style="left:19.7px;top:181.60px;font-size:10px;line-height:12px;color:#000;width:56.6px;text-align:right;letter-spacing:-0.45px;">2563</span>
<span id="t78" class="t" style="left:19.7px;top:196.20px;font-size:10px;line-height:12px;color:#000;width:56.6px;text-align:right;letter-spacing:-0.45px;">3050</span>
<span id="t79" class="t" style="left:19.7px;top:210.80px;font-size:10px;line-height:12px;color:#000;width:56.6px;text-align:right;letter-spacing:-0.45px;">4015</span>
<span id="t80" class="t" style="left:19.7px;top:225.40px;font-size:10px;line-height:12px;color:#000;width:56.6px;text-align:right;letter-spacing:-0.45px;">3256</span>
<span id="t81" class="t" style="left:19.7px;top:240.00px;font-size:10px;line-height:12px;color:#000;width:56.6px;text-align:right;letter-spacing:-0.45px;">2145</span>
<span id="t82" class="t" style="left:19.7px;top:254.60px;font-size:10px;line-height:12px;color:#000;width:56.6px;text-align:right;letter-spacing:-0.45px;">1111</span>
<span id="t83" class="t" style="left:19.7px;top:269.20px;font-size:10px;line-height:12px;color:#000;width:56.6px;text-align:right;letter-spacing:-0.45px;">5499</span>
<span id="t84" class="t" style="left:19.7px;top:283.80px;font-size:10px;line-height:12px;color:#000;width:56.6px;text-align:right;letter-spacing:-0.45px;">4785</span>
<span id="t85" class="t" style="left:19.7px;top:298.40px;font-size:10px;line-height:12px;color:#000;width:56.6px;text-align:right;letter-spacing:-0.45px;">3100</span>
<span id="t86" class="t" style="left:19.7px;top:313.00px;font-size:10px;line-height:12px;color:#000;width:56.6px;text-align:right;letter-spacing:-0.45px;">2001</span>
<span id="t87" class="t" style="left:19.7px;top:327.60px;font-size:10px;line-height:12px;color:#000;width:56.6px;text-align:right;letter-spacing:-0.45px;">2000</span>
<span id="t88" class="t" style="left:19.7px;top:342.20px;font-size:10px;line-height:12px;color:#000;width:56.6px;text-align:right;letter-spacing:-0.45px;">1000</span>
<span id="t89" class="t" style="left:19.7px;top:356.80px;font-size:10px;line-height:12px;color:#000;width:56.6px;text-align:right;letter-spacing:-0.45px;">3030</span>
<span id="t90" class="t" style="left:19.7px;top:371.40px;font-size:10px;line-height:12px;color:#000;width:56.6px;text-align:right;letter-spacing:-0.45px;">5478</span>
<span id="t91" class="t" style="left:19.7px;top:386.00px;font-size:10px;line-height:12px;color:#000;width:56.6px;text-align:right;letter-spacing:-0.45px;">6541</span>
<span id="t92" class="t" style="left:19.7px;top:400.60px;font-size:10px;line-height:12px;color:#000;width:56.6px;text-align:right;letter-spacing:-0.45px;">1002</span>
<span id="t93" class="t" style="left:19.7px;top:415.20px;font-size:10px;line-height:12px;color:#000;width:56.6px;text-align:right;letter-spacing:-0.45px;">3658</span>
<span id="t94" class="t" style="left:19.7px;top:429.80px;font-size:10px;line-height:12px;color:#000;width:56.6px;text-align:right;letter-spacing:-0.45px;">5874</span>
<span id="t95" class="t" style="left:19.7px;top:444.40px;font-size:10px;line-height:12px;color:#000;width:56.6px;text-align:right;letter-spacing:-0.45px;">5214</span>
<span id="t96" class="t" style="left:78.1px;top:181.60px;font-size:10px;line-height:12px;color:#000;width:56.6px;text-align:right;letter-spacing:-0.45px;">25</span>
<span id="t97" class="t" style="left:78.1px;top:196.20px;font-size:10px;line-height:12px;color:#000;width:56.6px;text-align:right;letter-spacing:-0.45px;">18</span>
<span id="t98" class="t" style="left:78.1px;top:210.80px;font-size:10px;line-height:12px;color:#000;width:56.6px;text-align:right;letter-spacing:-0.45px;">30</span>
<span id="t99" class="t" style="left:78.1px;top:225.40px;font-size:10px;line-height:12px;color:#000;width:56.6px;text-align:right;letter-spacing:-0.45px;">25</span>
<span id="t100" class="t" style="left:78.1px;top:240.00px;font-size:10px;line-height:12px;color:#000;width:56.6px;text-align:right;letter-spacing:-0.45px;">65</span>
<span id="t101" class="t" style="left:78.1px;top:254.60px;font-size:10px;line-height:12px;color:#000;width:56.6px;text-align:right;letter-spacing:-0.45px;">30</span>
<span id="t102" class="t" style="left:78.1px;top:269.20px;font-size:10px;line-height:12px;color:#000;width:56.6px;text-align:right;letter-spacing:-0.45px;">25</span>
<span id="t103" class="t" style="left:78.1px;top:283.80px;font-size:10px;line-height:12px;color:#000;width:56.6px;text-align:right;letter-spacing:-0.45px;">30</span>
<span id="t104" class="t" style="left:78.1px;top:298.40px;font-size:10px;line-height:12px;color:#000;width:56.6px;text-align:right;letter-spacing:-0.45px;">25</span>
<span id="t105" class="t" style="left:78.1px;top:313.00px;font-size:10px;line-height:12px;color:#000;width:56.6px;text-align:right;letter-spacing:-0.45px;">25</span>
<span id="t106" class="t" style="left:78.1px;top:327.60px;font-size:10px;line-height:12px;color:#000;width:56.6px;text-align:right;letter-spacing:-0.45px;">56</span>
<span id="t107" class="t" style="left:78.1px;top:342.20px;font-size:10px;line-height:12px;color:#000;width:56.6px;text-align:right;letter-spacing:-0.45px;">65</span>
<span id="t108" class="t" style="left:78.1px;top:356.80px;font-size:10px;line-height:12px;color:#000;width:56.6px;text-align:right;letter-spacing:-0.45px;">80</span>
<span id="t109" class="t" style="left:78.1px;top:371.40px;font-size:10px;line-height:12px;color:#000;width:56.6px;text-align:right;letter-spacing:-0.45px;">25</span>
<span id="t110" class="t" style="left:78.1px;top:386.00px;font-size:10px;line-height:12px;color:#000;width:56.6px;text-align:right;letter-spacing:-0.45px;">65</span>
<span id="t111" class="t" style="left:78.1px;top:400.60px;font-size:10px;line-height:12px;color:#000;width:56.6px;text-align:right;letter-spacing:-0.45px;">22</span>
<span id="t112" class="t" style="left:78.1px;top:415.20px;font-size:10px;line-height:12px;color:#000;width:56.6px;text-align:right;letter-spacing:-0.45px;">30</span>
<span id="t113" class="t" style="left:78.1px;top:429.80px;font-size:10px;line-height:12px;color:#000;width:56.6px;text-align:right;letter-spacing:-0.45px;">30</span>
<span id="t114" class="t" style="left:78.1px;top:444.40px;font-size:10px;line-height:12px;color:#000;width:56.6px;text-align:right;letter-spacing:-0.45px;">25</span>
<span id="t115" class="t" style="left:136.5px;top:181.60px;font-size:10px;line-height:12px;color:#000;width:56.6px;text-align:right;letter-spacing:-0.45px;">25</span>
<span id="t116" class="t" style="left:136.5px;top:196.20px;font-size:10px;line-height:12px;color:#000;width:56.6px;text-align:right;letter-spacing:-0.45px;">18</span>
<span id="t117" class="t" style="left:136.5px;top:210.80px;font-size:10px;line-height:12px;color:#000;width:56.6px;text-align:right;letter-spacing:-0.45px;">30</span>
<span id="t118" class="t" style="left:136.5px;top:225.40px;font-size:10px;line-height:12px;color:#000;width:56.6px;text-align:right;letter-spacing:-0.45px;">65</span>
<span id="t119" class="t" style="left:136.5px;top:240.00px;font-size:10px;line-height:12px;color:#000;width:56.6px;text-align:right;letter-spacing:-0.45px;">56</span>
<span id="t120" class="t" style="left:136.5px;top:254.60px;font-size:10px;line-height:12px;color:#000;width:56.6px;text-align:right;letter-spacing:-0.45px;">80</span>
<span id="t121" class="t" style="left:136.5px;top:269.20px;font-size:10px;line-height:12px;color:#000;width:56.6px;text-align:right;letter-spacing:-0.45px;">22</span>
<div style="left:716.4px;top:150.4px;width:10.8px;height:313px;background:#fff;border-left:1px solid #cfcfcf;border-right:1px solid #cfcfcf;"></div>
<div style="left:716.4px;top:151.4px;width:10.8px;height:10.2px;background:#fff;border:1px solid #ababab;"></div>
<svg style="left:719px;top:154.5px;" width="6" height="4" viewBox="0 0 6 4"><path d="M0 3.6 L3 0.4 L6 3.6 Z" fill="#555"/></svg>
<div style="left:716.4px;top:163.3px;width:10.8px;height:273.5px;background:#fff;border:1px solid #ababab;"></div>
<div style="left:716.4px;top:436.8px;width:10.8px;height:16px;background:#e1e1e1;"></div>
<div style="left:716.4px;top:452.8px;width:10.8px;height:10.2px;background:#fff;border:1px solid #ababab;"></div>
<svg style="left:719px;top:456.2px;" width="6" height="4" viewBox="0 0 6 4"><path d="M0 0.4 L3 3.6 L6 0.4 Z" fill="#555"/></svg>
<div style="left:0px;top:463px;width:730px;height:20px;background:#e6e6e6;"></div>
<div style="left:0px;top:462.6px;width:730px;height:1px;background:#ababab;"></div>
<svg style="left:20px;top:469px;" width="5" height="7" viewBox="0 0 5 7"><path d="M4 0.5 L1 3.5 L4 6.5" stroke="#cdcdcd" stroke-width="1" fill="none"/></svg>
<svg style="left:40px;top:469px;" width="5" height="7" viewBox="0 0 5 7"><path d="M1 0.5 L4 3.5 L1 6.5" stroke="#cdcdcd" stroke-width="1" fill="none"/></svg>
<div style="left:73.5px;top:466px;width:1px;height:14px;background:#a6a6a6;"></div>
<span id="t122" class="t" style="left:84px;top:466.60px;font-size:9px;line-height:12px;color:#555;letter-spacing:0.061px;">Solvetic</span>
<div style="left:126.8px;top:463px;width:69.5px;height:18.3px;background:#fff;border-left:1px solid #c6c6c6;border-right:1px solid #c6c6c6;"></div>
<div style="left:126.8px;top:479.6px;width:69.5px;height:1.7px;background:#217346;"></div>
<span id="t123" class="t" style="left:135.5px;top:467.00px;font-size:9.2px;line-height:12px;color:#217346;letter-spacing:0.145px;font-weight:bold;">Histograma</span>
<svg style="left:219.5px;top:466.5px;" width="13" height="13" viewBox="0 0 13 13"><circle cx="6.5" cy="6.5" r="5.4" fill="none" stroke="#777" stroke-width="1"/><path d="M6.5 3.6 V9.4 M3.6 6.5 H9.4" stroke="#666" stroke-width="1.4"/></svg>
<div style="left:438px;top:468.5px;width:1px;height:1px;background:#999;"></div>
<div style="left:438px;top:472px;width:1px;height:1px;background:#999;"></div>
<div style="left:438px;top:475.5px;width:1px;height:1px;background:#999;"></div>
<div style="left:450.5px;top:467.5px;width:263px;height:11px;background:#d9d9d9;border:1px solid #ababab;"></div>
<div style="left:450.5px;top:467.5px;width:11px;height:11px;background:#fff;border:1px solid #ababab;"></div>
<svg style="left:454px;top:470.5px;" width="4" height="5" viewBox="0 0 4 5"><path d="M3.6 0 L0.4 2.5 L3.6 5 Z" fill="#444"/></svg>
<div style="left:461.5px;top:467.5px;width:218px;height:11px;background:#fff;border:1px solid #ababab;"></div>
<div style="left:701px;top:467.5px;width:12.5px;height:11px;background:#fff;border:1px solid #ababab;"></div>
<svg style="left:705.5px;top:470.5px;" width="4" height="5" viewBox="0 0 4 5"><path d="M0.4 0 L3.6 2.5 L0.4 5 Z" fill="#444"/></svg>
<div style="left:0px;top:482.8px;width:730px;height:16px;background:#f1f1f1;"></div>
<div style="left:0px;top:482.6px;width:730px;height:1px;background:#d0d0d0;"></div>
<span id="t124" class="t" style="left:6.5px;top:484.60px;font-size:8.6px;line-height:12px;color:#555;letter-spacing:-0.231px;">Listo</span>
<svg style="left:57.5px;top:486px;" width="10" height="10" viewBox="0 0 10 10"><rect x="0.5" y="0.5" width="3.2" height="2.6" fill="#666"/><rect x="4.6" y="0.8" width="4.6" height="2" fill="#888"/><rect x="0.8" y="4" width="8.6" height="5.4" fill="#fff" stroke="#666" stroke-width="1"/><path d="M3 4 V9.4 M5.2 4 V9.4 M7.4 4 V9.4 M0.8 6.6 H9.4" stroke="#888" stroke-width="0.7"/></svg>
<div style="left:508.6px;top:483.5px;width:26.6px;height:15px;background:#cfcfcf;"></div>
<svg style="left:516.8px;top:486.3px;" width="10" height="9" viewBox="0 0 10 9"><rect x="0.5" y="0.5" width="9" height="8" fill="#fff" stroke="#555" stroke-width="1"/><path d="M3.5 0.5 V8.5 M6.5 0.5 V8.5 M0.5 3.2 H9.5 M0.5 5.8 H9.5" stroke="#555" stroke-width="0.8"/></svg>
<svg style="left:544px;top:486.5px;" width="10" height="9" viewBox="0 0 10 9"><rect x="0.5" y="0.5" width="9" height="8" fill="#f8f8f8" stroke="#666" stroke-width="1"/><rect x="2.7" y="2.2" width="4.6" height="4.6" fill="#fff" stroke="#777" stroke-width="0.8"/><path d="M4 3.5 H6 M4 5.3 H6" stroke="#888" stroke-width="0.6"/></svg>
<svg style="left:572px;top:486.5px;" width="10" height="9" viewBox="0 0 10 9"><rect x="0.5" y="0.5" width="9" height="8" fill="#f8f8f8" stroke="#666" stroke-width="1"/><path d="M3.2 0.5 V5 H6.8 V0.5" fill="none" stroke="#666" stroke-width="0.9"/></svg>
<div style="left:595.5px;top:490.6px;width:4px;height:1.2px;background:#555;"></div>
<div style="left:602px;top:490.8px;width:73px;height:1px;background:#b0b0b0;"></div>
<div style="left:638px;top:486.6px;width:2.4px;height:8.6px;background:#555;"></div>
<svg style="left:676.5px;top:487.2px;" width="8" height="8" viewBox="0 0 8 8"><path d="M4 0.6 V7.4 M0.6 4 H7.4" stroke="#555" stroke-width="1.3"/></svg>
<span id="t125" class="t" style="left:696px;top:484.80px;font-size:8.4px;line-height:12px;color:#555;letter-spacing:-0.605px;">100%</span>
<div style="left:264.2px;top:181px;width:289.00000000000006px;height:215px;box-shadow:0 4px 11px 2px rgba(0,0,0,0.24);"></div>
<div style="left:264.2px;top:181px;width:289.00000000000006px;height:215px;background:#f0f0f0;border:1.5px solid #418fdc;"></div>
<div style="left:265.4px;top:182.2px;width:286.6000000000001px;height:22px;background:#fff;"></div>
<span id="t126" class="t" style="left:270.8px;top:187.20px;font-size:9.2px;line-height:12px;color:#000;letter-spacing:-0.178px;">Histograma</span>
<span id="t127" class="t" style="left:499.5px;top:186.20px;font-size:9.8px;line-height:12px;color:#000;">?</span>
<svg style="left:530.5px;top:188px;" width="8.5" height="8.5" viewBox="0 0 8.5 8.5"><path d="M0.6 0.6 L7.9 7.9 M7.9 0.6 L0.6 7.9" stroke="#111" stroke-width="1"/></svg>
<div style="left:269.2px;top:210.3px;width:211.10000000000002px;height:61.89999999999998px;border:1px solid #dcdcdc;"></div>
<div style="left:272px;top:207.3px;width:32.5px;height:7px;background:#f0f0f0;"></div>
<span id="t128" class="t" style="left:274px;top:204.90px;font-size:8.8px;line-height:12px;color:#000;letter-spacing:-0.330px;">Entrada</span>
<div style="left:269.2px;top:284.3px;width:211.10000000000002px;height:100.80000000000001px;border:1px solid #dcdcdc;"></div>
<div style="left:272px;top:281.3px;width:74.5px;height:7px;background:#f0f0f0;"></div>
<span id="t129" class="t" style="left:274px;top:278.90px;font-size:8.8px;line-height:12px;color:#000;letter-spacing:-0.240px;">Opciones de salida</span>
<span id="t130" class="t" style="left:275.5px;top:218.60px;font-size:8.8px;line-height:12px;color:#000;letter-spacing:-0.163px;">Rango de <u>e</u>ntrada:</span>
<span id="t131" class="t" style="left:275.5px;top:237.10px;font-size:8.8px;line-height:12px;color:#000;letter-spacing:-0.304px;">Ra<u>n</u>go de clases:</span>
<div style="left:385.3px;top:216.7px;width:71.9px;height:14.900000000000006px;background:#fff;border:1px solid #b5b5b5;"></div>
<div style="left:457.20000000000005px;top:216.7px;width:15.4px;height:14.900000000000006px;background:#f4f4f4;border:1px solid #a9a9a9;"></div>
<svg style="left:460.90000000000003px;top:219.64999999999998px;" width="8" height="9" viewBox="0 0 8 9"><path d="M4 0.6 L7.2 4.2 H5 V6.2 H3 V4.2 H0.8 Z" fill="#111"/><rect x="1" y="7" width="6" height="1.2" fill="#111"/></svg>
<span id="t132" class="t" style="left:388.5px;top:218.75px;font-size:8.6px;line-height:12px;color:#000;letter-spacing:-0.431px;">$B$2:$B$20</span>
<div style="left:385.3px;top:235.6px;width:71.9px;height:14.700000000000017px;background:#fff;border:1px solid #b5b5b5;"></div>
<div style="left:457.20000000000005px;top:235.6px;width:15.4px;height:14.700000000000017px;background:#f4f4f4;border:1px solid #a9a9a9;"></div>
<svg style="left:460.90000000000003px;top:238.45px;" width="8" height="9" viewBox="0 0 8 9"><path d="M4 0.6 L7.2 4.2 H5 V6.2 H3 V4.2 H0.8 Z" fill="#111"/><rect x="1" y="7" width="6" height="1.2" fill="#111"/></svg>
<span id="t133" class="t" style="left:388.5px;top:237.55px;font-size:8.6px;line-height:12px;color:#000;letter-spacing:-0.532px;">$C$2:$C$8</span>
<div style="left:385.3px;top:290.4px;width:71.9px;height:14.300000000000011px;background:#eeeeee;border:1px solid #d0d0d0;"></div>
<div style="left:457.20000000000005px;top:290.4px;width:15.4px;height:14.300000000000011px;background:#f4f4f4;border:1px solid #a9a9a9;"></div>
<svg style="left:460.90000000000003px;top:293.04999999999995px;" width="8" height="9" viewBox="0 0 8 9"><path d="M4 0.6 L7.2 4.2 H5 V6.2 H3 V4.2 H0.8 Z" fill="#111"/><rect x="1" y="7" width="6" height="1.2" fill="#111"/></svg>
<div style="left:385.3px;top:306.9px;width:87.3px;height:14px;background:#fff;border:1px solid #a9a9a9;"></div>
<div style="left:275.2px;top:258.5px;width:9.4px;height:9.4px;background:#fff;border:1px solid #333;"></div>
<span id="t134" class="t" style="left:288.0px;top:257.30px;font-size:8.8px;line-height:12px;color:#000;letter-spacing:-0.096px;"><u>R</u>ótulos</span>
<div style="left:275.2px;top:343.7px;width:9.4px;height:9.4px;background:#fff;border:1px solid #333;"></div>
<span id="t135" class="t" style="left:288.0px;top:342.50px;font-size:8.8px;line-height:12px;color:#000;letter-spacing:-0.181px;">P<u>a</u>reto (Histograma ordenado)</span>
<div style="left:275.2px;top:356.6px;width:9.4px;height:9.4px;background:#fff;border:1px solid #333;"></div>
<span id="t136" class="t" style="left:288.0px;top:355.40px;font-size:8.8px;line-height:12px;color:#000;letter-spacing:-0.187px;"><u>P</u>orcentaje acumulado</span>
<div style="left:275.2px;top:369.8px;width:9.4px;height:9.4px;background:#fff;border:1px solid #333;"></div>
<svg style="left:276.4px;top:371.3px;" width="7" height="6.4" viewBox="0 0 7 6.4"><path d="M0.8 3.2 L2.7 5.2 L6.3 0.9" stroke="#111" stroke-width="1.1" fill="none"/></svg>
<span id="t137" class="t" style="left:288.0px;top:368.60px;font-size:8.8px;line-height:12px;color:#000;letter-spacing:-0.168px;"><u>C</u>rear gráfico</span>
<div style="left:286.5px;top:368.9px;width:50.30000000000001px;height:11.4px;border:1px dotted #333;"></div>
<svg style="left:274.20000000000005px;top:294.5px;" width="10.8" height="10.8" viewBox="0 0 10.8 10.8"><circle cx="5.4" cy="5.4" r="4.6" fill="#fff" stroke="#333" stroke-width="1"/></svg>
<span id="t138" class="t" style="left:288px;top:294.10px;font-size:8.8px;line-height:12px;color:#000;letter-spacing:-0.176px;">Rango de <u>s</u>alida:</span>
<svg style="left:274.20000000000005px;top:309.6px;" width="10.8" height="10.8" viewBox="0 0 10.8 10.8"><circle cx="5.4" cy="5.4" r="4.6" fill="#fff" stroke="#333" stroke-width="1"/><circle cx="5.4" cy="5.4" r="2.3" fill="#111"/></svg>
<span id="t139" class="t" style="left:288px;top:309.20px;font-size:8.8px;line-height:12px;color:#000;letter-spacing:-0.194px;">En una <u>h</u>oja nueva:</span>
<svg style="left:274.20000000000005px;top:325.1px;" width="10.8" height="10.8" viewBox="0 0 10.8 10.8"><circle cx="5.4" cy="5.4" r="4.6" fill="#fff" stroke="#333" stroke-width="1"/></svg>
<span id="t140" class="t" style="left:288px;top:324.70px;font-size:8.8px;line-height:12px;color:#000;letter-spacing:-0.083px;">En un <u>l</u>ibro nuevo</span>
<div style="left:489.1px;top:210.7px;width:47.799999999999955px;height:14.300000000000011px;background:#e1e1e1;border:1.6px solid #0078d7;"></div>
<span id="t141" class="t" style="left:498.5px;top:212.05px;font-size:8.8px;line-height:12px;color:#000;letter-spacing:-0.261px;">Aceptar</span>
<div style="left:489.1px;top:229px;width:47.799999999999955px;height:14.300000000000011px;background:#e1e1e1;border:1px solid #adadad;"></div>
<span id="t142" class="t" style="left:497px;top:230.35px;font-size:8.8px;line-height:12px;color:#000;letter-spacing:-0.402px;">Cancelar</span>
<div style="left:489.1px;top:249.9px;width:47.799999999999955px;height:14.700000000000017px;background:#e1e1e1;border:1px solid #adadad;"></div>
<span id="t143" class="t" style="left:501.5px;top:251.45px;font-size:8.8px;line-height:12px;color:#000;letter-spacing:-0.151px;">Ay<u>u</u>da</span>
<svg style="left:150px;top:185px;" width="140" height="100" viewBox="150 185 140 100"><defs><filter id="sh" x="-30%" y="-30%" width="160%" height="160%"><feGaussianBlur stdDeviation="2.6"/></filter><mask id="am" maskUnits="userSpaceOnUse" x="150" y="185" width="140" height="100"><rect x="150" y="185" width="140" height="100" fill="#fff"/><path d="M180 217 H228 V200 L271 232.4 L228 264 V248 H180 Z" fill="#000"/></mask></defs><g mask="url(#am)"><path d="M180 217 H228 V200 L271 232.4 L228 264 V248 H180 Z" transform="translate(-5,3.5)" fill="#000" opacity="0.33" filter="url(#sh)"/></g><path d="M180 217 H228 V200 L271 232.4 L228 264 V248 H180 Z" fill="#ff3838" opacity="0.8"/></svg>
<svg style="left:664px;top:432px;" width="64" height="64" viewBox="664 432 64 64"><defs><radialGradient id="lg" cx="50%" cy="50%" r="50%"><stop offset="0" stop-color="#fff" stop-opacity="0.82"/><stop offset="0.86" stop-color="#fff" stop-opacity="0.8"/><stop offset="0.95" stop-color="#dfe9f3" stop-opacity="0.75"/><stop offset="1" stop-color="#fff" stop-opacity="0"/></radialGradient></defs><circle cx="695.3" cy="464" r="28.5" fill="url(#lg)"/><path d="M696.3 475.4 C693 471.5 688.5 469.6 684.5 467.6 C679.5 465 677 461 677.6 455.6 C678.4 447.6 685.5 441.6 694.5 441.6 C703.5 441.6 710.2 447.4 710 454.6 C709.8 460.4 706 464.6 704.3 469 C703.4 471.6 703.6 473.6 705.6 475.2 C702 476.4 697.6 478.6 696.8 480.8 C700.5 482.2 707 478.4 710.4 480 C709.2 483 704.6 484.6 701.6 486.6" fill="none" stroke="#5a8fd0" stroke-width="2" stroke-linecap="round" stroke-linejoin="round" opacity="0.92"/></svg>
<div style="left:0px;top:0px;width:730px;height:1px;background:#888888;"></div>
<div style="left:0px;top:0px;width:1.4px;height:500px;background:#9a9a9a;"></div>
<div style="left:729px;top:0px;width:1px;height:500px;background:#8a8a8a;"></div>
<div style="left:0px;top:498.5px;width:730px;height:1.5px;background:#8a8a8a;"></div>
</div></body></html>
